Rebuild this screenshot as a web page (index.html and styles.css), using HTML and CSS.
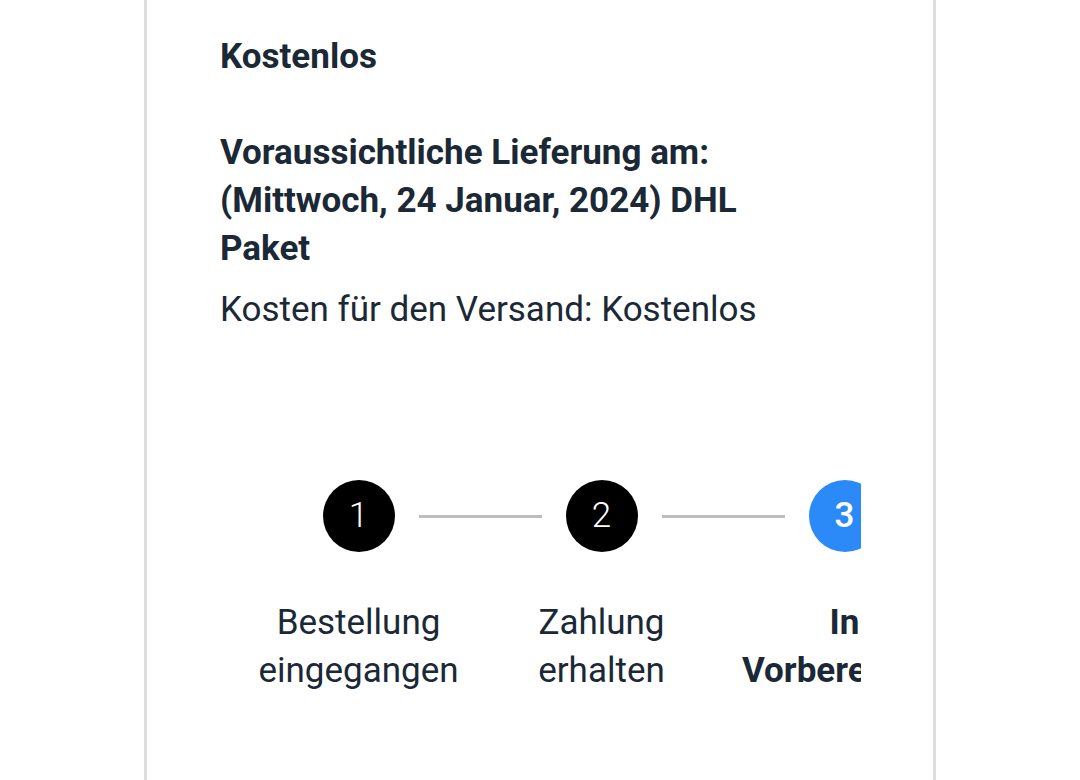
FILE: index.html
```html
<!DOCTYPE html>
<html lang="de">
<head>
<meta charset="utf-8">
<title>Lieferung</title>
<link rel="stylesheet" href="styles.css">
</head>
<body>
<div class="card">
  <p class="title">Kostenlos</p>
  <p class="delivery">Voraussichtliche Lieferung am: (Mittwoch, 24 Januar, 2024) DHL Paket</p>
  <p class="cost">Kosten für den Versand: Kostenlos</p>
  <div class="stepper">
    <div class="step">
      <div class="track"><span class="seg hidden"></span><span class="dot">1</span><span class="seg"></span></div>
      <div class="label">Bestellung eingegangen</div>
    </div>
    <div class="step">
      <div class="track"><span class="seg"></span><span class="dot">2</span><span class="seg"></span></div>
      <div class="label">Zahlung erhalten</div>
    </div>
    <div class="step active">
      <div class="track"><span class="seg"></span><span class="dot">3</span><span class="seg"></span></div>
      <div class="label">In Vorbereitung</div>
    </div>
  </div>
</div>
</body>
</html>
```
FILE: styles.css
```css
html, body {
  margin: 0;
  padding: 0;
  background: #ffffff;
}
body {
  font-family: Roboto, "Noto Sans", sans-serif;
  color: #1b2836;
  font-size: 35px;
  line-height: 48px;
}
.card {
  margin: 0 144px;
  min-height: 780px;
  box-sizing: border-box;
  border-left: 3px solid #dedede;
  border-right: 3px solid #dedede;
  padding: 33px 72px 0 73px;
}
p {
  margin: 0;
}
.title {
  font-weight: 700;
}
.delivery {
  font-weight: 700;
  margin-top: 48px;
  max-width: 560px;
}
.cost {
  margin-top: 13px;
  font-weight: 400;
}
.stepper {
  display: flex;
  overflow: hidden;
  margin-top: 146px;
  padding-left: 17px;
}
.step {
  flex: 0 0 243px;
  display: flex;
  flex-direction: column;
  align-items: stretch;
}
.track {
  display: flex;
  align-items: center;
  gap: 24px;
}
.seg {
  flex: 1;
  height: 3px;
  background: #bdbdbd;
}
.seg.hidden {
  background: transparent;
}
.dot {
  flex: 0 0 72px;
  height: 72px;
  border-radius: 50%;
  background: #000000;
  color: #ffffff;
  display: flex;
  align-items: center;
  justify-content: center;
  font-size: 35px;
  font-weight: 300;
}
.active .dot {
  background: #2b8af7;
  font-weight: 500;
}
.label {
  margin-top: 47px;
  text-align: center;
  padding: 0 6px;
}
.active .label {
  font-weight: 700;
}
```
